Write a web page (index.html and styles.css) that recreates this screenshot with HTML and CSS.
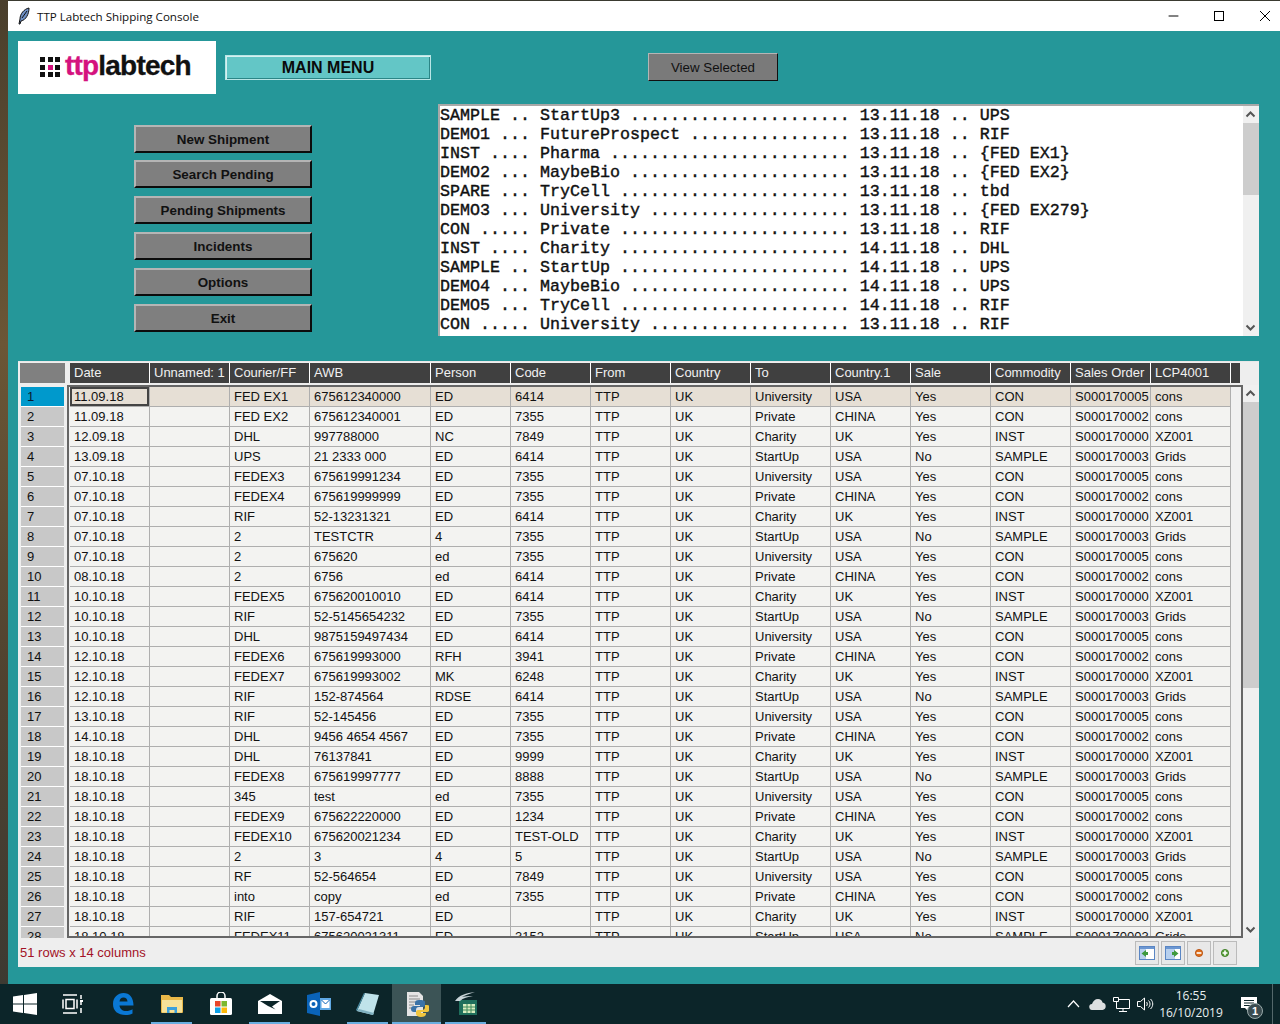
FILE: index.html
```html
<!DOCTYPE html>
<html lang="en">
<head>
<meta charset="utf-8">
<title>TTP Labtech Shipping Console</title>
<link rel="stylesheet" href="styles.css">
</head>
<body>
<div class="desktop">
  <div class="wall"></div>
  <div class="window">
    <header class="titlebar">
      <svg class="feather" width="14" height="18" viewBox="0 0 14 18"><path d="M12 1C7 2 3 7 3 12l-1 5 1 0 1-3c5-1 8-7 8-13z" fill="#6d8fc4" stroke="#111" stroke-width="1"/><path d="M10 4 5 11" stroke="#111" fill="none"/></svg>
      <span class="title">TTP Labtech Shipping Console</span>
      <div class="controls">
        <svg class="ctl" width="45" height="30" viewBox="0 0 46 30"><path d="M18 15h10" stroke="#000" stroke-width="1" fill="none"/></svg>
        <svg class="ctl" width="46" height="30" viewBox="0 0 46 30"><rect x="18.5" y="10.5" width="9" height="9" stroke="#000" fill="none"/></svg>
        <svg class="ctl" width="46" height="30" viewBox="0 0 46 30"><path d="M18 10l10 10M28 10 18 20" stroke="#000" fill="none"/></svg>
      </div>
    </header>
    <main class="client">
      <div class="toprow">
        <div class="logo">
          <span class="dots"><i></i><i></i><i></i><i></i><i class="pk"></i><i></i><i></i><i></i><i></i></span>
          <span class="wordmark"><b class="ttp">ttp</b>labtech</span>
        </div>
        <div class="mainmenu">MAIN MENU</div>
        <button class="viewbtn">View Selected</button>
      </div>
      <div class="midrow">
        <nav class="menu">
          <button class="btn">New Shipment</button>
          <button class="btn">Search Pending</button>
          <button class="btn">Pending Shipments</button>
          <button class="btn">Incidents</button>
          <button class="btn">Options</button>
          <button class="btn">Exit</button>
        </nav>
        <div class="listbox">
<pre class="listtext">SAMPLE .. StartUp3 ...................... 13.11.18 .. UPS
DEMO1 ... FutureProspect ................ 13.11.18 .. RIF
INST .... Pharma ........................ 13.11.18 .. {FED EX1}
DEMO2 ... MaybeBio ...................... 13.11.18 .. {FED EX2}
SPARE ... TryCell ....................... 13.11.18 .. tbd
DEMO3 ... University .................... 13.11.18 .. {FED EX279}
CON ..... Private ....................... 13.11.18 .. RIF
INST .... Charity ....................... 14.11.18 .. DHL
SAMPLE .. StartUp ....................... 14.11.18 .. UPS
DEMO4 ... MaybeBio ...................... 14.11.18 .. UPS
DEMO5 ... TryCell ....................... 14.11.18 .. RIF
CON ..... University .................... 13.11.18 .. RIF</pre>
          <div class="scroll listscroll">
            <svg class="arrow" width="15" height="17" viewBox="0 0 15 17"><path d="M3.5 10.5l4-4 4 4" stroke="#555" stroke-width="2" fill="none"/></svg>
            <div class="thumb listthumb"></div>
            <svg class="arrow bottom" width="15" height="17" viewBox="0 0 15 17"><path d="M3.5 6.5l4 4 4-4" stroke="#555" stroke-width="2" fill="none"/></svg>
          </div>
        </div>
      </div>
      <section class="panel">
        <div class="headrow">
          <div class="corner"></div>
          <div class="hc">Date</div><div class="hc">Unnamed: 1</div><div class="hc">Courier/FF</div><div class="hc wide">AWB</div><div class="hc">Person</div><div class="hc">Code</div><div class="hc">From</div><div class="hc">Country</div><div class="hc">To</div><div class="hc">Country.1</div><div class="hc">Sale</div><div class="hc">Commodity</div><div class="hc">Sales Order</div><div class="hc">LCP4001</div><div class="hc filler"></div>
        </div>
        <div class="bodyrow">
          <div class="nums">
            <div class="num sel">1</div><div class="num">2</div><div class="num">3</div><div class="num">4</div><div class="num">5</div><div class="num">6</div><div class="num">7</div><div class="num">8</div><div class="num">9</div><div class="num">10</div><div class="num">11</div><div class="num">12</div><div class="num">13</div><div class="num">14</div><div class="num">15</div><div class="num">16</div><div class="num">17</div><div class="num">18</div><div class="num">19</div><div class="num">20</div><div class="num">21</div><div class="num">22</div><div class="num">23</div><div class="num">24</div><div class="num">25</div><div class="num">26</div><div class="num">27</div><div class="num">28</div>
          </div>
          <div class="frame">
            <table class="grid">
              <colgroup><col class="c80"><col class="c80"><col class="c80"><col class="c121"><col class="c80"><col class="c80"><col class="c80"><col class="c80"><col class="c80"><col class="c80"><col class="c80"><col class="c80"><col class="c80"><col class="c80"></colgroup>
              <tbody>
<tr class="cur"><td class="focus">11.09.18</td><td></td><td>FED EX1</td><td>675612340000</td><td>ED</td><td>6414</td><td>TTP</td><td>UK</td><td>University</td><td>USA</td><td>Yes</td><td>CON</td><td>S000170005</td><td>cons</td></tr>
<tr><td>11.09.18</td><td></td><td>FED EX2</td><td>675612340001</td><td>ED</td><td>7355</td><td>TTP</td><td>UK</td><td>Private</td><td>CHINA</td><td>Yes</td><td>CON</td><td>S000170002</td><td>cons</td></tr>
<tr><td>12.09.18</td><td></td><td>DHL</td><td>997788000</td><td>NC</td><td>7849</td><td>TTP</td><td>UK</td><td>Charity</td><td>UK</td><td>Yes</td><td>INST</td><td>S000170000</td><td>XZ001</td></tr>
<tr><td>13.09.18</td><td></td><td>UPS</td><td>21 2333 000</td><td>ED</td><td>6414</td><td>TTP</td><td>UK</td><td>StartUp</td><td>USA</td><td>No</td><td>SAMPLE</td><td>S000170003</td><td>Grids</td></tr>
<tr><td>07.10.18</td><td></td><td>FEDEX3</td><td>675619991234</td><td>ED</td><td>7355</td><td>TTP</td><td>UK</td><td>University</td><td>USA</td><td>Yes</td><td>CON</td><td>S000170005</td><td>cons</td></tr>
<tr><td>07.10.18</td><td></td><td>FEDEX4</td><td>675619999999</td><td>ED</td><td>7355</td><td>TTP</td><td>UK</td><td>Private</td><td>CHINA</td><td>Yes</td><td>CON</td><td>S000170002</td><td>cons</td></tr>
<tr><td>07.10.18</td><td></td><td>RIF</td><td>52-13231321</td><td>ED</td><td>6414</td><td>TTP</td><td>UK</td><td>Charity</td><td>UK</td><td>Yes</td><td>INST</td><td>S000170000</td><td>XZ001</td></tr>
<tr><td>07.10.18</td><td></td><td>2</td><td>TESTCTR</td><td>4</td><td>7355</td><td>TTP</td><td>UK</td><td>StartUp</td><td>USA</td><td>No</td><td>SAMPLE</td><td>S000170003</td><td>Grids</td></tr>
<tr><td>07.10.18</td><td></td><td>2</td><td>675620</td><td>ed</td><td>7355</td><td>TTP</td><td>UK</td><td>University</td><td>USA</td><td>Yes</td><td>CON</td><td>S000170005</td><td>cons</td></tr>
<tr><td>08.10.18</td><td></td><td>2</td><td>6756</td><td>ed</td><td>6414</td><td>TTP</td><td>UK</td><td>Private</td><td>CHINA</td><td>Yes</td><td>CON</td><td>S000170002</td><td>cons</td></tr>
<tr><td>10.10.18</td><td></td><td>FEDEX5</td><td>675620010010</td><td>ED</td><td>6414</td><td>TTP</td><td>UK</td><td>Charity</td><td>UK</td><td>Yes</td><td>INST</td><td>S000170000</td><td>XZ001</td></tr>
<tr><td>10.10.18</td><td></td><td>RIF</td><td>52-5145654232</td><td>ED</td><td>7355</td><td>TTP</td><td>UK</td><td>StartUp</td><td>USA</td><td>No</td><td>SAMPLE</td><td>S000170003</td><td>Grids</td></tr>
<tr><td>10.10.18</td><td></td><td>DHL</td><td>9875159497434</td><td>ED</td><td>6414</td><td>TTP</td><td>UK</td><td>University</td><td>USA</td><td>Yes</td><td>CON</td><td>S000170005</td><td>cons</td></tr>
<tr><td>12.10.18</td><td></td><td>FEDEX6</td><td>675619993000</td><td>RFH</td><td>3941</td><td>TTP</td><td>UK</td><td>Private</td><td>CHINA</td><td>Yes</td><td>CON</td><td>S000170002</td><td>cons</td></tr>
<tr><td>12.10.18</td><td></td><td>FEDEX7</td><td>675619993002</td><td>MK</td><td>6248</td><td>TTP</td><td>UK</td><td>Charity</td><td>UK</td><td>Yes</td><td>INST</td><td>S000170000</td><td>XZ001</td></tr>
<tr><td>12.10.18</td><td></td><td>RIF</td><td>152-874564</td><td>RDSE</td><td>6414</td><td>TTP</td><td>UK</td><td>StartUp</td><td>USA</td><td>No</td><td>SAMPLE</td><td>S000170003</td><td>Grids</td></tr>
<tr><td>13.10.18</td><td></td><td>RIF</td><td>52-145456</td><td>ED</td><td>7355</td><td>TTP</td><td>UK</td><td>University</td><td>USA</td><td>Yes</td><td>CON</td><td>S000170005</td><td>cons</td></tr>
<tr><td>14.10.18</td><td></td><td>DHL</td><td>9456 4654 4567</td><td>ED</td><td>7355</td><td>TTP</td><td>UK</td><td>Private</td><td>CHINA</td><td>Yes</td><td>CON</td><td>S000170002</td><td>cons</td></tr>
<tr><td>18.10.18</td><td></td><td>DHL</td><td>76137841</td><td>ED</td><td>9999</td><td>TTP</td><td>UK</td><td>Charity</td><td>UK</td><td>Yes</td><td>INST</td><td>S000170000</td><td>XZ001</td></tr>
<tr><td>18.10.18</td><td></td><td>FEDEX8</td><td>675619997777</td><td>ED</td><td>8888</td><td>TTP</td><td>UK</td><td>StartUp</td><td>USA</td><td>No</td><td>SAMPLE</td><td>S000170003</td><td>Grids</td></tr>
<tr><td>18.10.18</td><td></td><td>345</td><td>test</td><td>ed</td><td>7355</td><td>TTP</td><td>UK</td><td>University</td><td>USA</td><td>Yes</td><td>CON</td><td>S000170005</td><td>cons</td></tr>
<tr><td>18.10.18</td><td></td><td>FEDEX9</td><td>675622220000</td><td>ED</td><td>1234</td><td>TTP</td><td>UK</td><td>Private</td><td>CHINA</td><td>Yes</td><td>CON</td><td>S000170002</td><td>cons</td></tr>
<tr><td>18.10.18</td><td></td><td>FEDEX10</td><td>675620021234</td><td>ED</td><td>TEST-OLD</td><td>TTP</td><td>UK</td><td>Charity</td><td>UK</td><td>Yes</td><td>INST</td><td>S000170000</td><td>XZ001</td></tr>
<tr><td>18.10.18</td><td></td><td>2</td><td>3</td><td>4</td><td>5</td><td>TTP</td><td>UK</td><td>StartUp</td><td>USA</td><td>No</td><td>SAMPLE</td><td>S000170003</td><td>Grids</td></tr>
<tr><td>18.10.18</td><td></td><td>RF</td><td>52-564654</td><td>ED</td><td>7849</td><td>TTP</td><td>UK</td><td>University</td><td>USA</td><td>Yes</td><td>CON</td><td>S000170005</td><td>cons</td></tr>
<tr><td>18.10.18</td><td></td><td>into</td><td>copy</td><td>ed</td><td>7355</td><td>TTP</td><td>UK</td><td>Private</td><td>CHINA</td><td>Yes</td><td>CON</td><td>S000170002</td><td>cons</td></tr>
<tr><td>18.10.18</td><td></td><td>RIF</td><td>157-654721</td><td>ED</td><td></td><td>TTP</td><td>UK</td><td>Charity</td><td>UK</td><td>Yes</td><td>INST</td><td>S000170000</td><td>XZ001</td></tr>
<tr><td>18.10.18</td><td></td><td>FEDEX11</td><td>675620021311</td><td>ED</td><td>3152</td><td>TTP</td><td>UK</td><td>StartUp</td><td>USA</td><td>No</td><td>SAMPLE</td><td>S000170003</td><td>Grids</td></tr>
              </tbody>
            </table>
          </div>
          <div class="scroll tablescroll">
            <svg class="arrow" width="15" height="17" viewBox="0 0 15 17"><path d="M3.5 10.5l4-4 4 4" stroke="#555" stroke-width="2" fill="none"/></svg>
            <div class="thumb tablethumb"></div>
            <svg class="arrow bottom" width="15" height="17" viewBox="0 0 15 17"><path d="M3.5 6.5l4 4 4-4" stroke="#555" stroke-width="2" fill="none"/></svg>
          </div>
        </div>
        <div class="footrow">
          <span class="status">51 rows x 14 columns</span>
          <div class="tools">
            <div class="tool"><svg width="16" height="14" viewBox="0 0 16 14"><rect x=".5" y=".5" width="15" height="13" fill="#fff" stroke="#5a86c4"/><rect x="1" y="1" width="6" height="12" fill="#b8d0ee"/><rect x="1" y="1" width="14" height="2" fill="#6c97d2"/><path d="M7 4 2.500 7.500 7 11V9h2V6H7z" fill="#3f9a3f"/></svg></div>
            <div class="tool"><svg width="16" height="14" viewBox="0 0 16 14"><rect x=".5" y=".5" width="15" height="13" fill="#fff" stroke="#5a86c4"/><rect x="1" y="1" width="9" height="12" fill="#b8d0ee"/><rect x="1" y="1" width="14" height="2" fill="#6c97d2"/><path d="M9 4l4.500 3.500L9 11V9H7V6h2z" fill="#3f9a3f"/></svg></div>
            <div class="tool"><svg width="8" height="8" viewBox="0 0 10 10"><circle cx="5" cy="5" r="4.500" fill="#e0701c" stroke="#b04808"/><rect x="2" y="4" width="6" height="2" fill="#fff"/></svg></div>
            <div class="tool"><svg width="8" height="8" viewBox="0 0 10 10"><circle cx="5" cy="5" r="4.500" fill="#5aa03a" stroke="#35761c"/><path d="M4 2h2v2h2v2H6v2H4V6H2V4h2z" fill="#fff"/></svg></div>
          </div>
        </div>
      </section>
    </main>
  </div>
</div>
<footer class="taskbar">
  <div class="task"><svg width="24" height="24" viewBox="0 0 24 24"><path d="M0 4.500 10 3v8.500H0zM11 2.900 24 1v10.500H11zM0 12.500h10V21L0 19.500zM11 12.500h13V23l-13-1.900z" fill="#fff"/></svg></div>
  <div class="task"><svg width="24" height="20" viewBox="0 0 24 20"><path d="M1 1h14M1 19h14M4 5.500h8v9H4zM1 5.500v9M15 5.500v9M19 1v4M19 8v3M19 14v5" stroke="#fff" stroke-width="1.500" fill="none"/><rect x="18" y="6" width="3" height="2" fill="#fff"/></svg></div>
  <div class="task"><svg width="22" height="24" viewBox="0 0 22 24"><path d="M1 12C1 5 6 1 11.500 1 17.500 1 21.500 5.500 21.500 13.500H7.500c.3 3.500 3 5.500 6.500 5.500 2.500 0 4.800-.7 6.500-1.800v4.300C18.500 22.500 16 23 13.500 23 6 23 1 19 1 12zM7.500 9.500h8C15.300 7 13.800 5.500 11.500 5.500S7.800 7 7.500 9.500z" fill="#0a78d4"/></svg></div>
  <div class="task running"><svg width="22" height="20" viewBox="0 0 22 20"><path d="M0 1h8l2 2h12v15a1 1 0 0 1-1 1H1a1 1 0 0 1-1-1z" fill="#e9b949"/><path d="M1 6h20v12.500H1z" fill="#f6e29a"/><path d="M6 13h10v6h-2.500v-3h-5v3H6z" fill="#3aa0dc"/></svg></div>
  <div class="task"><svg width="24" height="24" viewBox="0 0 24 24"><path d="M8 7V4a4 4 0 0 1 8 0v3" stroke="#fff" fill="none" stroke-width="1.500"/><rect x="1" y="6" width="22" height="17" rx="1.500" fill="#fff"/><rect x="6" y="9" width="5.500" height="5.500" fill="#e8462b"/><rect x="12.500" y="9" width="5.500" height="5.500" fill="#7cb82f"/><rect x="6" y="15.500" width="5.500" height="5.500" fill="#0ea2e8"/><rect x="12.500" y="15.500" width="5.500" height="5.500" fill="#fdb90a"/></svg></div>
  <div class="task running"><svg width="24" height="20" viewBox="0 0 24 20"><path d="M12 0 24 7v13H0V7z" fill="#fff"/><path d="M2 7h20l-8 5.500 3.500 3-7.500-3.500z" fill="#0c2529"/></svg></div>
  <div class="task"><svg width="24" height="24" viewBox="0 0 24 24"><path d="M0 3 13 0v24L0 21z" fill="#0a63b8"/><path d="M13 6h11v12H13z" fill="#5fa8e4"/><path d="M14.500 8h8v8h-8z" fill="#fff"/><path d="M14.500 8l4 4 4-4" stroke="#0a63b8" fill="none"/><circle cx="6.500" cy="12" r="3" stroke="#fff" stroke-width="2" fill="none"/></svg></div>
  <div class="task running"><svg width="24" height="24" viewBox="0 0 24 24"><path d="M9 1 23 3 17 23 1 19z" fill="#bfe3ea"/><path d="M1 19 9 1 8 1 0 18z" fill="#4d90a8"/><path d="M1 19l16 4 1-2L3 17z" fill="#7fb0c0"/></svg></div>
  <div class="task active"><svg width="24" height="26" viewBox="0 0 24 26"><path d="M2 1h12l4 4v20H2z" fill="#e4e4e4"/><path d="M4 5h9M4 8h11M4 11h7M4 14h5M4 17h5" stroke="#8a8a8a"/><path d="M14 9c-3 0-4 1-4 3v2h5v1H9c-2 0-3 1-3 3s1 3 3 3h2v-2c0-2 1-3 3-3h4c1.500 0 2-1 2-2v-3c0-1.500-2-2-6-2z" fill="#3b73a8"/><path d="M20 14v2c0 2-1 3-3 3h-4c-1.500 0-2 1-2 2v2c0 1.500 2 3 5 3s5-1 5-3v-1h-5v-1h6c2 0 3-2 3-4s-1-3-3-3z" fill="#f2c63e"/></svg></div>
  <div class="task running"><svg width="24" height="24" viewBox="0 0 24 24"><path d="M5 8h18v15H5z" fill="#1f6f5c"/><path d="M9 12h12v9H9z" fill="#d9ecc0"/><path d="M9 15h12M9 18h12M13 12v9M17 12v9" stroke="#3f8c5c"/><path d="M1 9C5 3 12 1 21 0 16 2 11 3 8 5c3-1 7-1 11-1-5 1-10 2-13 5z" fill="#c8d4d8"/></svg></div>
  <div class="tray">
    <div class="ti"><svg width="13" height="8" viewBox="0 0 13 8"><path d="M1 7l5.500-6L12 7" stroke="#fff" fill="none" stroke-width="1.200"/></svg></div>
    <div class="ti"><svg width="17" height="11" viewBox="0 0 17 11"><path d="M3.500 11a3 3 0 0 1-.5-6C4 2 6 0 9 0c2.500 0 4 1.500 4.500 3.500a3.800 3.800 0 0 1 0 7.500z" fill="#dcdfe0"/></svg></div>
    <div class="ti"><svg width="17" height="16" viewBox="0 0 17 16"><path d="M.5 1.500h5v4h-5zM5.500 3.500h11v9h-13v-7M10 12.500v3M6 15.500h8" stroke="#fff" fill="none"/></svg></div>
    <div class="ti"><svg width="17" height="14" viewBox="0 0 17 14"><path d="M.5 4.500h3l4-3.500v12l-4-3.500h-3z" stroke="#fff" fill="none"/><path d="M9.500 5c1 1 1 3 0 4M11.500 3.500c2 2 2 5 0 7M13.500 2c3 3 3 7 0 10" stroke="#fff" fill="none"/></svg></div>
    <div class="clock"><span>16:55</span><span>16/10/2019</span></div>
    <div class="notify">
      <svg width="16" height="15" viewBox="0 0 16 15"><path d="M0 0h16v11H8v4l-4-4H0z" fill="#fff"/><path d="M3 3.500h10M3 6h10M3 8.500h7" stroke="#0c2529"/></svg>
      <span class="badge">1</span>
    </div>
    <div class="showdesk"></div>
  </div>
</footer>
</body>
</html>
```
FILE: styles.css
```css
* { box-sizing: border-box; }
html, body { margin: 0; padding: 0; }
body {
  width: 1280px;
  height: 1024px;
  overflow: hidden;
  display: flex;
  flex-direction: column;
  font-family: "Liberation Sans", Arial, sans-serif;
  font-size: 13px;
  color: #111;
}
.desktop { display: flex; height: 984px; }
.wall {
  width: 8px;
  background: linear-gradient(180deg, #4a3f2c 0%, #6b5636 35%, #4f4230 70%, #3d3a32 100%);
}
.window { flex: 1; min-width: 0; display: flex; flex-direction: column; border-top: 1px solid #3a3a30; overflow: hidden; }

.titlebar { height: 30px; background: #fff; display: flex; align-items: center; padding-left: 9px; flex: none; }
.feather { flex: none; }
.title { margin-left: 6px; font-family: "Open Sans", "Noto Sans", sans-serif; font-size: 11.600px; color: #111; }
.controls { margin-left: auto; margin-right: -8px; display: flex; flex: none; }
.ctl { display: block; }

.client { flex: 1; background: #259799; padding-left: 10px; padding-right: 21px; display: flex; flex-direction: column; }
.toprow { display: flex; align-items: flex-start; padding-top: 10px; height: 63px; flex: none; }
.logo {
  width: 198px; height: 53px; background: #fff;
  display: flex; align-items: center; padding-left: 22px; gap: 5px; flex: none;
}
.dots { display: grid; grid-template-columns: repeat(3, 5px); grid-auto-rows: 5px; gap: 2.500px; margin-top: -1px; }
.dots i { background: #111; display: block; }
.dots i.pk { background: #d4127e; }
.wordmark { font-weight: 700; font-size: 28px; letter-spacing: -0.800px; color: #111; line-height: 1; margin-top: -3px; -webkit-text-stroke: 0.300px #111; }
.ttp { color: #d4127e; font-weight: 700; -webkit-text-stroke: 0.300px #d4127e; }
.mainmenu {
  margin-left: 9px; margin-top: 14px; width: 206px; height: 25px; flex: none;
  background: #63c6c6; border: 1px solid #b9e6e6; box-shadow: inset 1px 1px 0 #d6f0f0, inset -1px -1px 0 #2b8586;
  font-weight: 700; font-size: 16px; color: #0a0a0a;
  display: flex; align-items: center; justify-content: center;
}
.viewbtn {
  margin-left: 217px; margin-top: 12px; width: 130px; height: 28px; padding: 0; flex: none;
  background: #7a7a7a; border: 1px solid; border-color: #b5b5b5 #101010 #101010 #b5b5b5;
  font-family: inherit; font-size: 13.300px; color: #111;
}
.midrow { display: flex; align-items: flex-start; height: 267px; flex: none; }
.menu { margin-left: 116px; margin-top: 31px; width: 178px; display: flex; flex-direction: column; gap: 8px; flex: none; }
.btn {
  height: 28px; padding: 0; background: #7f7f7f;
  border: 2px solid; border-color: #b5b5b5 #0c0c0c #0c0c0c #b5b5b5;
  font-family: inherit; font-weight: 700; font-size: 13.400px; color: #111;
}
.btn:first-child { margin-bottom: -1px; }
.listbox {
  margin-left: 126px; margin-top: 10px; width: 821px; height: 232px; flex: none;
  background: #fff; border-top: 2px solid #a8a8a8; border-left: 2px solid #a8a8a8;
  display: flex;
}
.listtext {
  flex: 1; margin: 0; padding: 0; overflow: hidden;
  font-family: "Liberation Mono", "Courier New", monospace; font-weight: 400;
  -webkit-text-stroke: 0.400px #111;
  font-size: 16.670px; line-height: 19px; color: #111;
}
.scroll { width: 16px; background: #f0f0f0; display: flex; flex-direction: column; flex: none; }
.arrow { display: block; flex: none; }
.arrow.bottom { margin-top: auto; }
.thumb { background: #cdcdcd; flex: none; }
.listthumb { height: 72px; }
.tablethumb { height: 286px; }
.listscroll { height: 230px; }

.panel {
  width: 1241px; height: 606px; flex: none;
  background: #eeeeee; border-top: 1px solid #e8e8e8; display: flex; flex-direction: column;
}
.headrow { display: flex; margin-top: 1px; margin-left: 2px; height: 21px; flex: none; }
.corner { width: 45px; height: 20px; background: #808080; margin-right: 5px; }
.hc {
  width: 80px; height: 20px; background: #404040; color: #f0f0f0; padding-left: 4px;
  border-right: 1px solid #fff; font-size: 13px; line-height: 20px; white-space: nowrap; overflow: hidden;
}
.hc.wide { width: 121px; }
.hc.filler { width: 9px; border-right: none; }
.bodyrow { display: flex; margin-top: 1px; height: 553px; flex: none; }
.nums { margin-left: 3px; width: 43px; height: 553px; overflow: hidden; padding-top: 2px; flex: none; }
.num {
  height: 20px; background: #c8c8c8; border-bottom: 1px solid #fff; padding-left: 6px;
  font-size: 13px; line-height: 19px; color: #111;
}
.num.sel { background: #0099cc; color: #0a1a30; }
.frame {
  margin-left: 3px; width: 1176px; height: 553px; overflow: hidden; flex: none;
  border: 2px solid #666; padding-left: 1px; background: #f0f0f0;
}
.grid { border-collapse: separate; border-spacing: 0; table-layout: fixed; width: 1161px; }
.c80 { width: 80px; }
.c121 { width: 121px; }
.grid td {
  height: 20px; padding: 0 0 0 4px; background: #f3f3f1;
  border-right: 1px solid #aeaeae; border-bottom: 1px solid #aeaeae;
  font-size: 13px; line-height: 19px; white-space: nowrap; overflow: hidden; color: #111;
}
.grid tr.cur td { background: #e6dfd5; }
.grid td.focus { box-shadow: inset 0 0 0 2px #444; }
.tablescroll { height: 553px; width: 16px; }
.footrow { display: flex; align-items: flex-start; padding-left: 2px; padding-right: 22px; flex: 1; }
.status { color: #a31226; font-size: 13px; line-height: 30px; }
.tools { margin-left: auto; margin-top: 3px; display: flex; gap: 2px; }
.tool { width: 24px; height: 24px; border: 1px solid #bbb; background: #e8e8e8; display: flex; align-items: center; justify-content: center; }

.taskbar { height: 40px; background: #0c2529; display: flex; color: #fff; flex: none; }
.task { width: 49px; height: 40px; display: flex; align-items: center; justify-content: center; position: relative; flex: none; }
.task.running::after { content: ""; position: absolute; left: 4px; right: 4px; bottom: 0; height: 2px; background: #6aaee0; }
.task.active { background: #3c5456; }
.task.active::after { content: ""; position: absolute; left: 0; right: 0; bottom: 0; height: 2px; background: #6aaee0; }
.tray { margin-left: auto; display: flex; align-items: center; height: 40px; }
.ti { width: 24px; display: flex; justify-content: center; }
.clock {
  width: 68px; display: flex; flex-direction: column; align-items: center;
  font-family: "Open Sans", "Noto Sans", sans-serif; font-size: 12px; line-height: 17px; color: #e8eeee;
}
.notify { width: 47px; height: 40px; position: relative; display: flex; align-items: center; justify-content: center; }
.badge {
  position: absolute; left: 22px; top: 19px; width: 16px; height: 16px; border-radius: 50%;
  background: #3a4c50; border: 1px solid #9aa; color: #fff; font-size: 11px; font-weight: 700;
  display: flex; align-items: center; justify-content: center;
}
.showdesk { width: 8px; height: 40px; border-left: 1px solid #54686b; }
```
